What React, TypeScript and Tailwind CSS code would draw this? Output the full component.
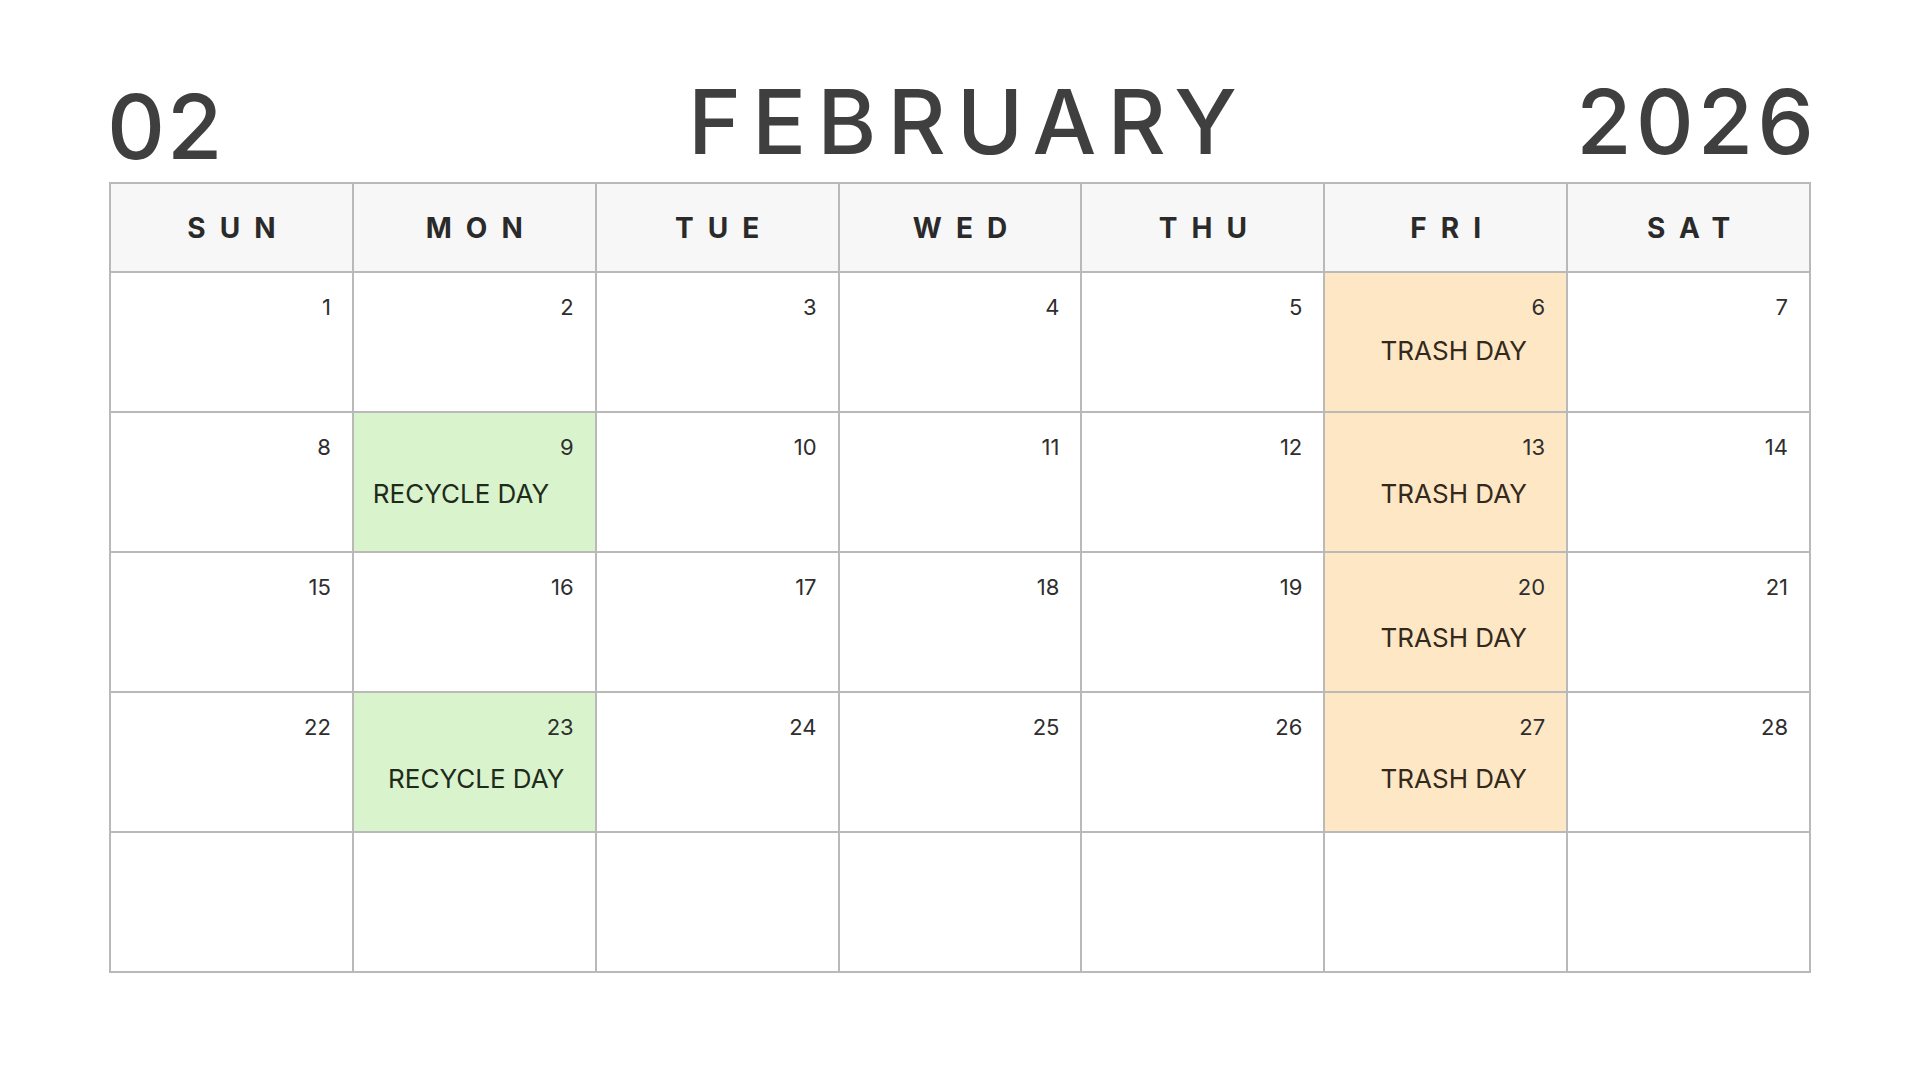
import React from 'react';

type TEvent = {
  label: string;
  kind: 'trash' | 'recycle';
  placeClass: string;
  offset: number;
};

type TCell = {
  day: number | null;
  event?: TEvent;
};

const WEEK_DAYS = ['SUN', 'MON', 'TUE', 'WED', 'THU', 'FRI', 'SAT'];

const trash = (offset: number): TEvent => ({
  label: 'TRASH DAY',
  kind: 'trash',
  placeClass: 'pl-[16px] text-center',
  offset,
});

const EVENTS: { [day: number]: TEvent } = {
  6: trash(0),
  9: { label: 'RECYCLE DAY', kind: 'recycle', placeClass: 'pl-[19px] text-left', offset: 3 },
  13: trash(3),
  20: trash(7),
  23: { label: 'RECYCLE DAY', kind: 'recycle', placeClass: 'pl-[4px] text-center', offset: 8 },
  27: trash(8),
};

// feb 2026 starts on a sunday, 5 rows shown
const buildCells = (): TCell[] => {
  const cells: TCell[] = [];
  for (let i = 0; i < 35; i++) {
    const day = i < 28 ? i + 1 : null;
    cells.push({ day, event: day ? EVENTS[day] : undefined });
  }
  return cells;
};

const DayCell = ({ cell }: { cell: TCell }) => {
  const { day, event } = cell;
  const bg = event ? (event.kind === 'trash' ? 'bg-[#fee7c4]' : 'bg-[#d9f3cd]') : 'bg-white';
  const textColor = event?.kind === 'trash' ? 'text-[#33291c]' : 'text-[#1f2b1a]';

  return (
    <div className={`flex h-[140px] flex-col border-r-2 border-b-2 border-[#b9b9b9] ${bg}`}>
      {day && (
        <div className="pr-[21px] pt-[18px] text-right text-[22px] text-[#2e2e2e]">{day}</div>
      )}
      {event && (
        <div
          className={`text-[26px] ${textColor} ${event.placeClass}`}
          style={{ marginTop: 7 + event.offset }}
        >
          {event.label}
        </div>
      )}
    </div>
  );
};

export default function App() {
  const cells = buildCells();

  return (
    <div
      className="h-[1080px] w-[1920px] bg-white"
      style={{ fontFamily: 'Inter, "Noto Sans", sans-serif' }}
    >
      <div className="pl-[107px] pr-[102px] pt-[67px]">
        <div className="grid grid-cols-[1fr_auto_1fr] items-start font-medium text-[#3f3f3f]">
          <div className="translate-y-[5px] text-[90px] leading-[110px] tracking-[2px]">02</div>
          <div className="pl-[11px] text-[90px] leading-[110px] tracking-[11px]">FEBRUARY</div>
          <div className="text-right text-[90px] leading-[110px] tracking-[4px]">2026</div>
        </div>
      </div>

      <div className="ml-[109px] mt-[5px] w-[1702px] border-t-2 border-l-2 border-[#b9b9b9]">
        <div className="grid grid-cols-7">
          {WEEK_DAYS.map((d) => (
            <div
              key={d}
              className="flex h-[89px] items-center justify-center border-r-2 border-b-2 border-[#b9b9b9] bg-[#f7f7f7] pl-[14px] text-[28px] font-bold tracking-[14px] text-[#2a2a2a]"
            >
              {d}
            </div>
          ))}
          {cells.map((c, i) => (
            <DayCell key={i} cell={c} />
          ))}
        </div>
      </div>
    </div>
  );
}
